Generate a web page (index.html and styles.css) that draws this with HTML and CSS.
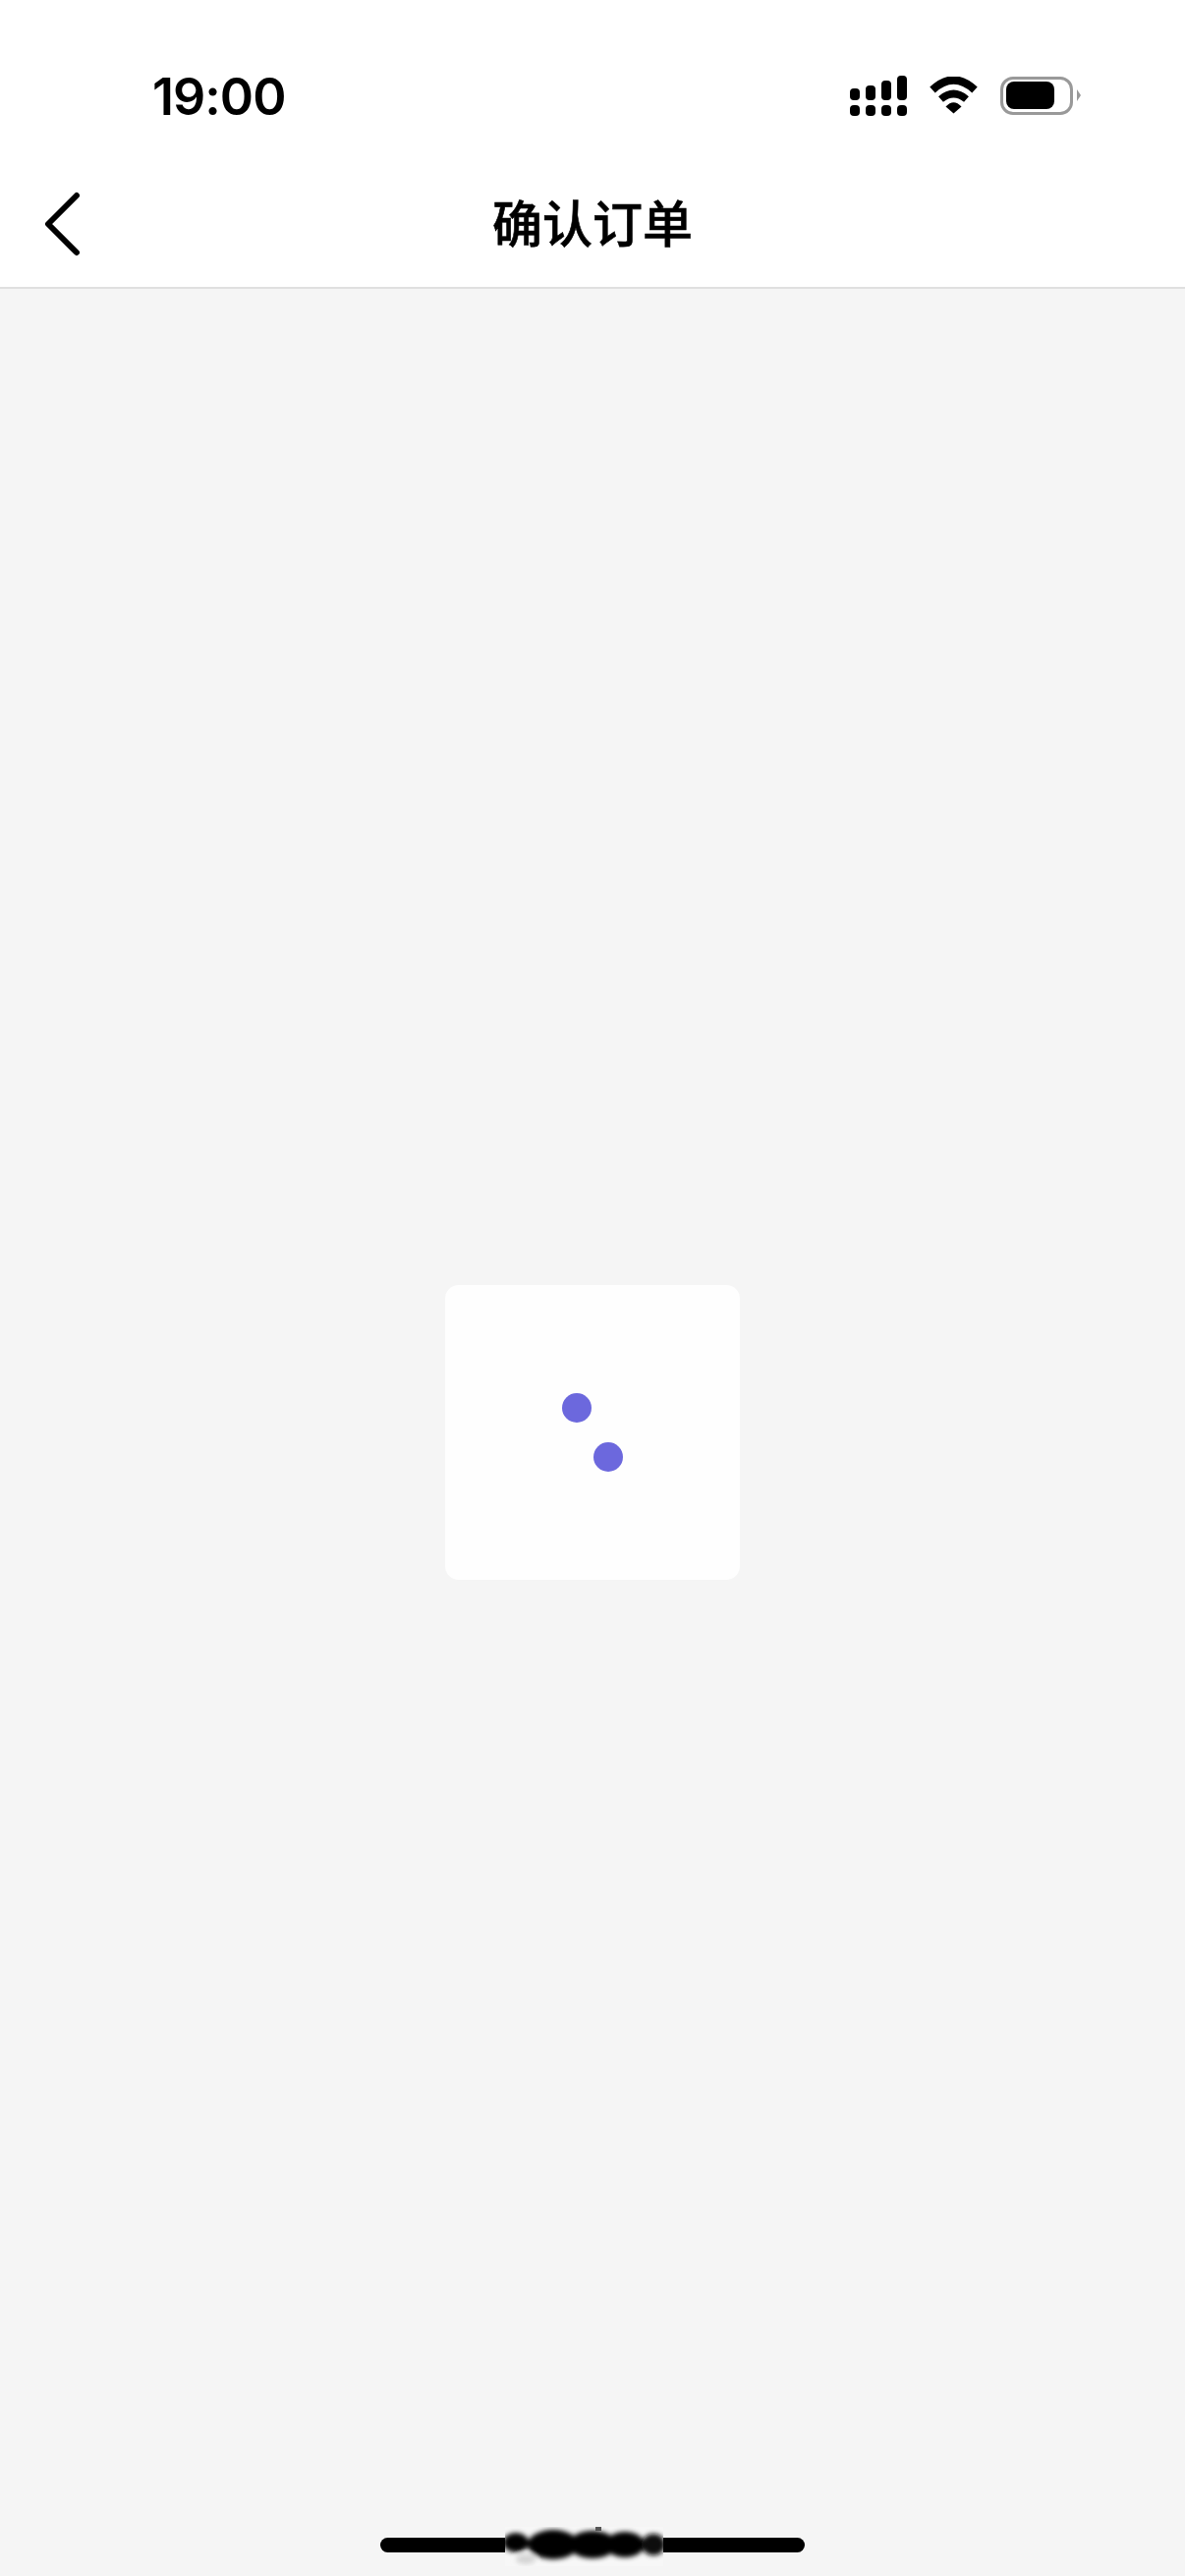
FILE: index.html
```html
<!DOCTYPE html>
<html>
<head>
    <meta charset="UTF-8">
    <link rel="stylesheet" href="styles.css">
</head>
<body>
    <div class="page">
        <div class="status-bar">
            <span class="time">19:00</span>
            <div class="status-icons">
                <div class="signal">
                    <div class="signal-col"><i class="bar bar-1"></i><i class="dot"></i></div>
                    <div class="signal-col"><i class="bar bar-2"></i><i class="dot"></i></div>
                    <div class="signal-col"><i class="bar bar-3"></i><i class="dot"></i></div>
                    <div class="signal-col"><i class="bar bar-4"></i><i class="dot"></i></div>
                </div>
                <svg class="wifi" width="50" height="38" viewBox="0 0 50 38">
                    <path d="M3 13.5Q24.5 -6.5 46 13.5" fill="none" stroke="#000" stroke-width="8"/>
                    <path d="M11.5 23Q24.5 12 37.5 23" fill="none" stroke="#000" stroke-width="7.5"/>
                    <path d="M16.5 30.5Q24.5 22 32.5 30.5L24.5 37.5Z" fill="#000"/>
                </svg>
                <div class="battery">
                    <div class="battery-body"><div class="battery-level"></div></div>
                    <div class="battery-nub"></div>
                </div>
            </div>
        </div>

        <div class="nav-bar">
            <div class="nav-left">
                <svg class="back" width="40" height="66" viewBox="0 0 40 66">
                    <path d="M33 4L4 33L33 62" fill="none" stroke="#000" stroke-width="6" stroke-linecap="round" stroke-linejoin="round"/>
                </svg>
            </div>
            <h1 class="title">确认订单</h1>
            <div></div>
        </div>

        <div class="content">
            <div class="loading-card">
                <div class="spinner">
                    <div class="spinner-dot"></div>
                    <div class="spinner-dot spinner-dot-end"></div>
                </div>
            </div>
        </div>

        <div class="home-bar">
            <svg class="smudge" width="161" height="40" viewBox="0 0 161 40">
                <defs>
                    <filter id="soft" x="-10%" y="-30%" width="120%" height="160%">
                        <feGaussianBlur stdDeviation="2.5"/>
                    </filter>
                </defs>
                <rect width="161" height="40" fill="#f7f7f7"/>
                <g filter="url(#soft)">
                    <ellipse cx="21" cy="33" rx="10" ry="5" fill="#d4d4d4"/>
                    <ellipse cx="11" cy="16" rx="13" ry="10" fill="#000"/>
                    <ellipse cx="49" cy="18" rx="26" ry="15" fill="#000"/>
                    <ellipse cx="89" cy="18" rx="24" ry="14" fill="#000"/>
                    <ellipse cx="122" cy="18" rx="20" ry="13" fill="#000"/>
                    <ellipse cx="151" cy="18" rx="12" ry="11" fill="#111"/>
                </g>
                <rect x="92" y="0" width="6" height="4" fill="#555"/>
            </svg>
        </div>
    </div>
</body>
</html>
```

FILE: styles.css
```css
* {
    box-sizing: border-box;
}

body {
    margin: 0;
    background: #f5f5f5;
    font-family: "Inter", "Noto Sans CJK SC", sans-serif;
}

.page {
    position: relative;
    display: flex;
    flex-direction: column;
    height: 2622px;
    overflow: hidden;
}

.status-bar {
    display: flex;
    justify-content: space-between;
    align-items: center;
    height: 172px;
    padding: 26px 106px 0 155px;
    background: #fff;
}

.time {
    font-size: 52px;
    font-weight: 600;
    line-height: 1;
    color: #000;
    letter-spacing: -1px;
}

.status-icons {
    display: flex;
    align-items: center;
    margin-top: -4px;
}

.signal {
    display: flex;
    gap: 6px;
    margin-right: 23px;
}

.signal-col {
    display: flex;
    flex-direction: column;
    justify-content: flex-end;
    gap: 5px;
    height: 41px;
}

.bar, .dot {
    display: block;
    width: 10px;
    background: #000;
    border-radius: 4px;
}

.dot { height: 11px; }
.bar-1 { height: 12px; }
.bar-2 { height: 15px; }
.bar-3 { height: 20px; }
.bar-4 { height: 25px; }

.wifi {
    margin-right: 22px;
}

.battery {
    display: flex;
    align-items: center;
}

.battery-body {
    width: 74px;
    height: 39px;
    padding: 2px 16px 3px 3px;
    border: 3px solid #999;
    border-radius: 13px;
    margin-right: 4px;
}

.battery-level {
    height: 100%;
    background: #000;
    border-radius: 8px;
}

.battery-nub {
    width: 4px;
    height: 12px;
    background: #999;
    clip-path: polygon(0 0, 100% 50%, 0 100%);
}

.nav-bar {
    display: grid;
    grid-template-columns: 1fr auto 1fr;
    align-items: center;
    height: 122px;
    padding-bottom: 8px;
    background: #fff;
    border-bottom: 2px solid #e0e0e0;
}

.nav-left {
    display: flex;
    padding-left: 45px;
}

.title {
    margin: 0;
    font-size: 51px;
    font-weight: 500;
    -webkit-text-stroke: 0.6px #000;
    line-height: 1;
    color: #000;
}

.content {
    flex: 1;
    display: flex;
    justify-content: center;
    align-items: center;
}

.loading-card {
    display: flex;
    justify-content: center;
    align-items: center;
    width: 300px;
    height: 300px;
    background: #fefefe;
    border-radius: 14px;
}

.spinner {
    display: flex;
    flex-direction: column;
    justify-content: space-between;
    width: 62px;
    height: 80px;
}

.spinner-dot {
    width: 30px;
    height: 30px;
    background: #6c68dd;
    border-radius: 50%;
}

.spinner-dot-end {
    align-self: flex-end;
}

.home-bar {
    position: absolute;
    left: 387px;
    top: 2583px;
    width: 432px;
    height: 15px;
    background: #000;
    border-radius: 8px;
}

.smudge {
    position: absolute;
    left: 127px;
    top: -11px;
}
```
